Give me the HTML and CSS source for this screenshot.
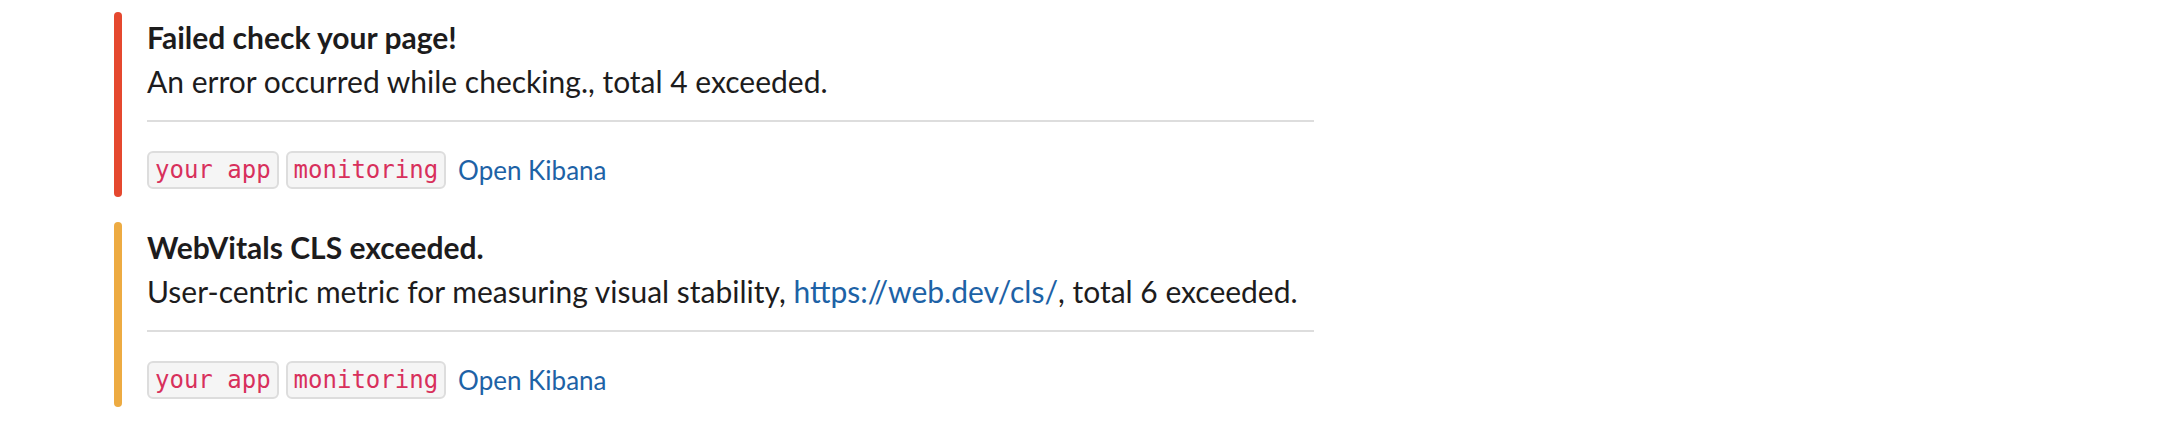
FILE: index.html
```html
<!DOCTYPE html>
<html lang="en">
<head>
<meta charset="utf-8">
<title>Alerts</title>
<link rel="stylesheet" href="styles.css">
</head>
<body>
<div class="list">
  <div class="attachment">
    <div class="bar bar-red"></div>
    <div class="content">
      <div class="title">Failed check your page!</div>
      <div class="text">An error occurred while checking., total 4 exceeded.</div>
      <div class="divider"></div>
      <div class="footer">
        <code class="tag">your app</code>
        <code class="tag">monitoring</code>
        <a class="link small" href="#">Open Kibana</a>
      </div>
    </div>
  </div>
  <div class="attachment">
    <div class="bar bar-orange"></div>
    <div class="content">
      <div class="title">WebVitals CLS exceeded.</div>
      <div class="text">User-centric metric for measuring visual stability, <a class="link" href="#">https://web.dev/cls/</a>, total 6 exceeded.</div>
      <div class="divider"></div>
      <div class="footer">
        <code class="tag">your app</code>
        <code class="tag">monitoring</code>
        <a class="link small" href="#">Open Kibana</a>
      </div>
    </div>
  </div>
</div>
</body>
</html>
```
FILE: styles.css
```css
html, body {
  margin: 0;
  padding: 0;
  background: #ffffff;
}
body {
  font-family: Lato, "Noto Sans", sans-serif;
  color: #1d1c1d;
}
.list {
  padding: 12px 0 0 114px;
  display: flex;
  flex-direction: column;
  gap: 25px;
}
.attachment {
  display: flex;
  width: 1200px;
}
.bar {
  width: 8px;
  border-radius: 4px;
  flex-shrink: 0;
}
.bar-red { background: #e5482f; }
.bar-orange { background: #edab42; }
.content {
  flex: 1;
  padding: 3px 0 8px 25px;
}
.title {
  font-size: 30px;
  font-weight: 700;
  line-height: 44px;
}
.text {
  font-size: 30px;
  line-height: 44px;
}
.divider {
  margin-top: 17px;
  height: 2px;
  background: #dddddd;
}
.footer {
  margin-top: 29px;
  height: 38px;
  display: flex;
  align-items: center;
  gap: 7px;
}
.tag {
  font-family: "DejaVu Sans Mono", "Liberation Mono", monospace;
  font-size: 24px;
  line-height: 30px;
  color: #d8305c;
  background: #f5f5f5;
  border: 2px solid #dddddd;
  border-radius: 6px;
  padding: 2px 6px 2px 6px;
}
.link {
  color: #1d62a6;
  text-decoration: none;
}
.small {
  font-size: 26px;
  margin-left: 5px;
}
```
